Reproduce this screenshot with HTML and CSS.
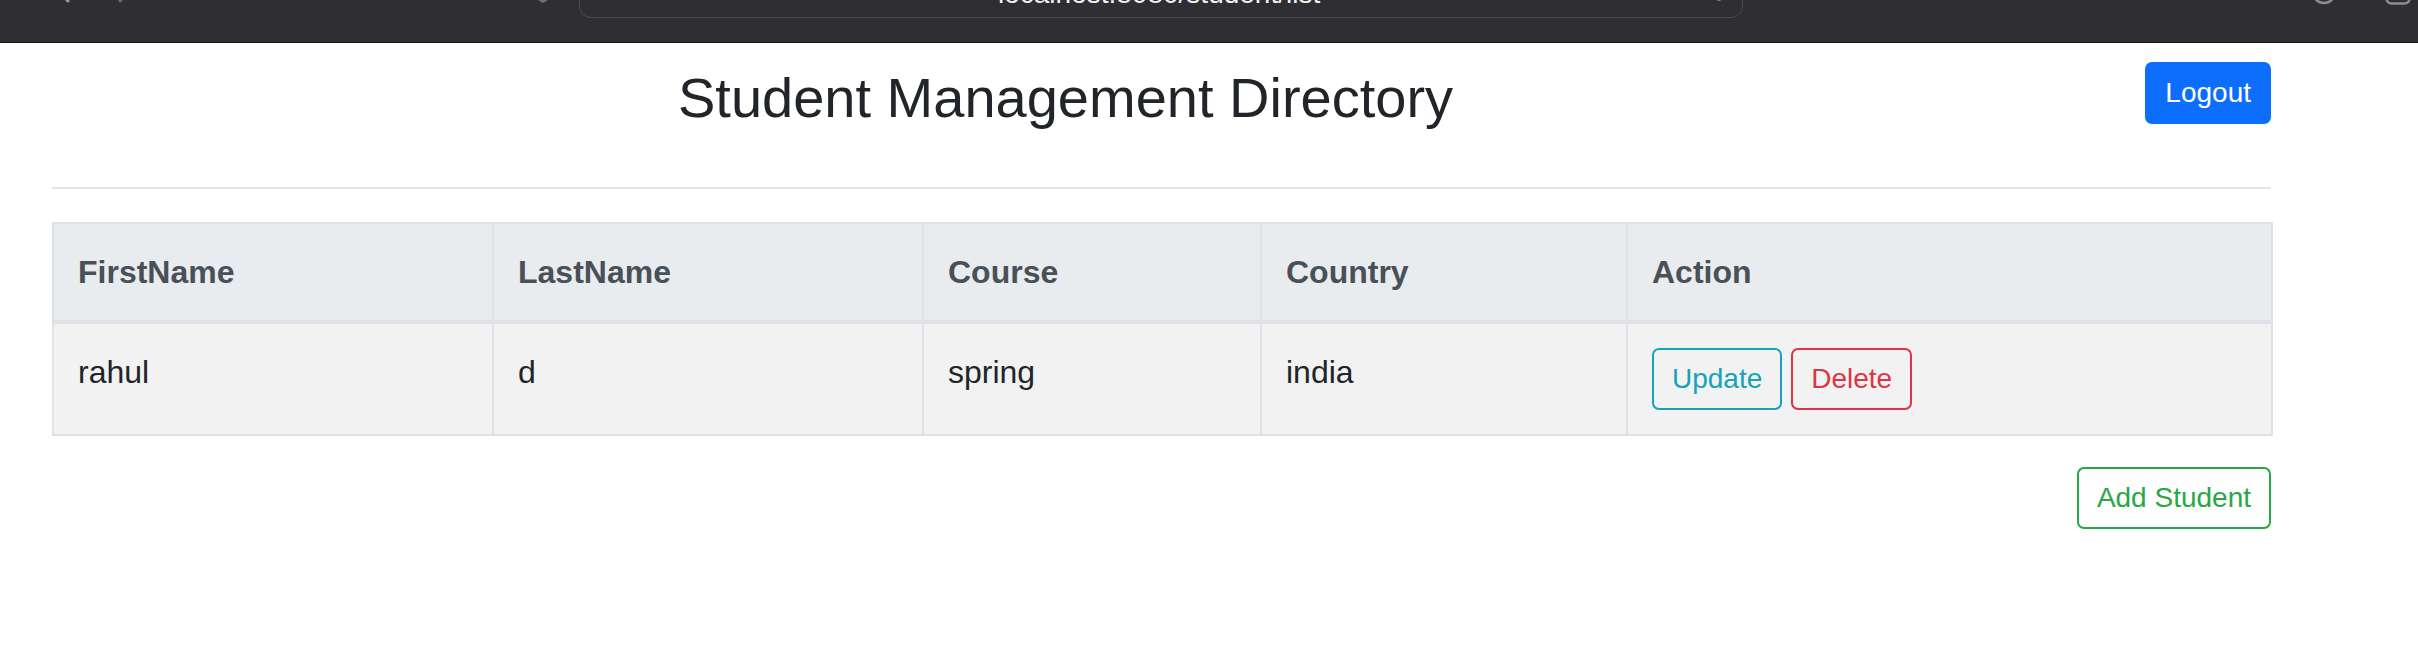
FILE: index.html
```html
<!DOCTYPE html>
<html lang="en">
<head>
<meta charset="utf-8">
<title>Student Management Directory</title>
<link rel="stylesheet" href="styles.css">
</head>
<body>
<div class="chrome">
  <div class="chrome-row">
    <svg class="ic ic-back" width="22" height="30" viewBox="0 0 22 30"><path d="M16 2 L4 15 L16 28" fill="none" stroke="#9a999e" stroke-width="3" stroke-linecap="round"/></svg>
    <svg class="ic ic-fwd" width="22" height="30" viewBox="0 0 22 30"><path d="M6 2 L18 15 L6 28" fill="none" stroke="#6a696e" stroke-width="3" stroke-linecap="round"/></svg>
    <svg class="ic ic-shield" width="24" height="30" viewBox="0 0 24 30"><path d="M12 2 L22 6 V14 C22 21 17 26 12 28 C7 26 2 21 2 14 V6 Z" fill="#6f6e73"/></svg>
    <div class="urlbar">
      <span class="url">localhost:8080/student/list</span>
      <svg class="ic ic-reload" width="16" height="30" viewBox="0 0 16 30"><path d="M3 20 A6 6 0 1 0 8 14" fill="none" stroke="#d8d8da" stroke-width="3"/></svg>
    </div>
    <svg class="ic ic-circle" width="26" height="26" viewBox="0 0 26 26"><circle cx="13" cy="13" r="11" fill="none" stroke="#8e8d92" stroke-width="2.5"/></svg>
    <svg class="ic ic-square" width="26" height="26" viewBox="0 0 26 26"><rect x="1.5" y="1.5" width="23" height="23" rx="5" fill="none" stroke="#8e8d92" stroke-width="2.5"/></svg>
  </div>
</div>

<main class="page">
  <header class="top">
    <h3 class="title">Student Management Directory</h3>
    <button class="btn btn-primary">Logout</button>
  </header>
  <hr class="divider">
  <table class="students">
    <colgroup>
      <col class="c-first">
      <col class="c-last">
      <col class="c-course">
      <col class="c-country">
      <col class="c-action">
    </colgroup>
    <thead>
      <tr>
        <th>FirstName</th>
        <th>LastName</th>
        <th>Course</th>
        <th>Country</th>
        <th>Action</th>
      </tr>
    </thead>
    <tbody>
      <tr>
        <td>rahul</td>
        <td>d</td>
        <td>spring</td>
        <td>india</td>
        <td><a class="btn btn-outline-info">Update</a> <a class="btn btn-outline-danger">Delete</a></td>
      </tr>
    </tbody>
  </table>
  <div class="actions">
    <a class="btn btn-outline-success">Add Student</a>
  </div>
</main>
</body>
</html>
```

FILE: styles.css
```css
* { box-sizing: border-box; }

html, body {
  margin: 0;
  padding: 0;
  background: #ffffff;
  font-family: "Liberation Sans", Arial, sans-serif;
  color: #212529;
}

/* browser chrome strip */
.chrome {
  height: 43px;
  background: #2f2e33;
  border-bottom: 1px solid #0d0d0f;
  overflow: hidden;
}

.chrome-row {
  display: flex;
  align-items: flex-end;
  height: 18px;
}

.ic { flex: none; display: block; }

.ic-back { margin-left: 52px; margin-bottom: 15px; }
.ic-fwd { margin-left: 40px; margin-bottom: 15px; }
.ic-shield { margin-left: 395px; margin-bottom: 13px; }

.urlbar {
  flex: none;
  margin-left: 24px;
  width: 1164px;
  height: 44px;
  border: 1.5px solid #4b4a50;
  border-radius: 12px;
  background: #2f2e33;
  display: flex;
  align-items: flex-end;
  position: relative;
}

.url {
  margin-left: 418px;
  margin-bottom: 9px;
  font: 28px/28px "Liberation Sans", Arial, sans-serif;
  color: #f2f2f2;
  white-space: nowrap;
}

.ic-reload {
  margin-left: auto;
  margin-right: 16px;
  margin-bottom: 14px;
}

.ic-circle { margin-left: 568px; margin-bottom: 13px; }
.ic-square { margin-left: 48px; margin-bottom: 13px; }

/* page */
.page {
  padding: 0 147px 0 52px;
}

.top {
  display: flex;
  align-items: flex-start;
  padding-top: 19px;
}

.title {
  margin: 2px 0 0 626px;
  font-weight: 400;
  font-size: 56px;
  line-height: 1.2;
  color: #212529;
}

.divider {
  margin: 56px 0 33px;
  border: 0;
  border-top: 2px solid #e5e5e5;
  height: 0;
}

/* buttons */
.btn {
  display: inline-block;
  font-family: "Liberation Sans", Arial, sans-serif;
  font-size: 28px;
  line-height: 42px;
  padding: 8px 18px;
  border: 2px solid transparent;
  border-radius: 7px;
  background: transparent;
  text-decoration: none;
  cursor: pointer;
  vertical-align: middle;
}

.btn-primary {
  margin-left: auto;
  color: #ffffff;
  background: #0d6efd;
  border-color: #0d6efd;
}

.btn-outline-info {
  color: #17a2b8;
  border-color: #17a2b8;
}

.btn-outline-danger {
  color: #dc3545;
  border-color: #dc3545;
}

.btn-outline-success {
  color: #28a745;
  border-color: #28a745;
}

/* table */
.students {
  width: 100%;
  border-collapse: collapse;
  table-layout: fixed;
  font-size: 32px;
  line-height: 48px;
}

.c-first { width: 440px; }
.c-last { width: 430px; }
.c-course { width: 338px; }
.c-country { width: 366px; }
.c-action { width: 645px; }

.students th,
.students td {
  padding: 24px;
  border: 2px solid #dee2e6;
  text-align: left;
  vertical-align: top;
}

.students th {
  background: #e9ecef;
  color: #495057;
  font-weight: 700;
  border-bottom-width: 4px;
}

.students td {
  background: #f2f2f2;
  color: #212529;
}

.students td .btn {
  vertical-align: baseline;
}

.actions {
  display: flex;
  justify-content: flex-end;
  margin-top: 31px;
}
```
